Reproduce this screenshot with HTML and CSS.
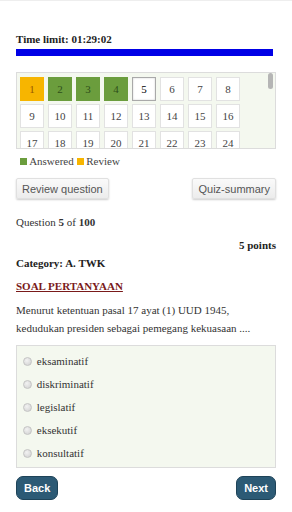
FILE: index.html
```html
<!DOCTYPE html>
<html lang="id">
<head>
  <meta charset="UTF-8" />
  <meta name="viewport" content="width=device-width, initial-scale=1" />
  <title>Quiz</title>
  <link rel="stylesheet" href="styles.css">
</head>
<body>
  <div class="page">
    <div class="timer">Time limit: 01:29:02</div>
    <div class="timebar"></div>

    <div class="overview">
      <div class="cells">
        <span class="cell review">1</span>
        <span class="cell answered">2</span>
        <span class="cell answered">3</span>
        <span class="cell answered">4</span>
        <span class="cell current">5</span>
        <span class="cell">6</span>
        <span class="cell">7</span>
        <span class="cell">8</span>
        <span class="cell">9</span>
        <span class="cell">10</span>
        <span class="cell">11</span>
        <span class="cell">12</span>
        <span class="cell">13</span>
        <span class="cell">14</span>
        <span class="cell">15</span>
        <span class="cell">16</span>
        <span class="cell">17</span>
        <span class="cell">18</span>
        <span class="cell">19</span>
        <span class="cell">20</span>
        <span class="cell">21</span>
        <span class="cell">22</span>
        <span class="cell">23</span>
        <span class="cell">24</span>
      </div>
      <div class="scroll-thumb"></div>
    </div>

    <div class="legend">
      <span class="sq sq-answered"></span> Answered
      <span class="sq sq-review"></span> Review
    </div>

    <div class="tools">
      <button class="btn-light">Review question</button>
      <button class="btn-light">Quiz-summary</button>
    </div>

    <p class="counter">Question <b>5</b> of <b>100</b></p>
    <p class="points">5 points</p>
    <p class="category">Category: A. TWK</p>
    <p class="title">SOAL PERTANYAAN</p>
    <p class="question">Menurut ketentuan pasal 17 ayat (1) UUD 1945, kedudukan presiden sebagai pemegang kekuasaan ....</p>

    <ul class="answers">
      <li><input type="radio" name="a"> eksaminatif</li>
      <li><input type="radio" name="a"> diskriminatif</li>
      <li><input type="radio" name="a"> legislatif</li>
      <li><input type="radio" name="a"> eksekutif</li>
      <li><input type="radio" name="a"> konsultatif</li>
    </ul>

    <div class="nav">
      <button class="btn-dark">Back</button>
      <button class="btn-dark">Next</button>
    </div>
  </div>
</body>
</html>
```

FILE: styles.css
```css
body {
  margin: 0;
  font-family: "Liberation Serif", "Times New Roman", serif;
  font-size: 11px;
  color: #333;
  background: #fff;
}
.page {
  padding: 31px 16px 0 16px;
  border-top: 1px solid #eee;
}
.timer {
  font-weight: bold;
  font-size: 11px;
  color: #222;
  line-height: 14px;
}
.timebar {
  height: 7px;
  background: #0000e6;
  margin-top: 3px;
  width: 257px;
}
.overview {
  position: relative;
  margin-top: 16px;
  height: 75px;
  border: 1px solid #dcdcdc;
  background: #f4f8ef;
  overflow: hidden;
}
.cells {
  display: grid;
  grid-template-columns: repeat(8, 24px);
  gap: 3px 4px;
  padding: 4px 0 0 3px;
}
.cell {
  box-sizing: border-box;
  height: 24px;
  border: 1px solid #e2e2e2;
  background: #fff;
  color: #444;
  text-align: center;
  line-height: 22px;
  font-size: 11px;
}
.cell.answered {
  background: #6b9d3d;
  border-color: #6b9d3d;
  color: #2f4f1a;
}
.cell.review {
  background: #f7b500;
  border-color: #f7b500;
  color: #9a5a00;
}
.cell.current {
  border: 1px solid #a9a9a9;
  color: #000;
  box-shadow: inset 0 0 2px #ccc;
}
.scroll-thumb {
  position: absolute;
  right: 2px;
  top: 0;
  width: 5px;
  height: 16px;
  border-radius: 3px;
  background: #b5b5b5;
}
.legend {
  margin-top: 5px;
  color: #444;
  font-size: 11px;
  line-height: 14px;
}
.sq {
  display: inline-block;
  width: 7px;
  height: 7px;
}
.sq-answered {
  background: #6b9d3d;
  margin-left: 4px;
}
.sq-review {
  background: #f7b500;
}
.tools {
  display: flex;
  justify-content: space-between;
  margin-top: 10px;
}
.btn-light {
  font-family: "Liberation Sans", Arial, sans-serif;
  font-size: 11px;
  color: #555;
  height: 21px;
  padding: 0 5px;
  background: linear-gradient(#fafafa, #ececec);
  border: 1px solid #e0e0e0;
  border-radius: 2px;
  box-shadow: 0 1px 2px rgba(0,0,0,0.2);
}
p {
  margin: 0;
}
.counter {
  margin-top: 17px;
  color: #333;
}
.points {
  margin-top: 11px;
  text-align: right;
  font-weight: bold;
  color: #222;
}
.category {
  margin-top: 6px;
  font-weight: bold;
  color: #222;
}
.title {
  margin-top: 11px;
  font-weight: bold;
  color: #7a1a1a;
  text-decoration: underline;
}
.question {
  margin-top: 9px;
  line-height: 18px;
  color: #333;
}
.answers {
  list-style: none;
  margin: 8px 0 0 0;
  padding: 4px 6px 2px 6px;
  border: 1px solid #dcdcdc;
  background: #f4f8ef;
}
.answers li {
  height: 23px;
  line-height: 23px;
  color: #333;
}
.answers input {
  appearance: none;
  box-sizing: border-box;
  width: 9px;
  height: 9px;
  margin: 0 2px 0 0;
  vertical-align: -1px;
  border: 1px solid #c4c4c4;
  border-radius: 50%;
  background: radial-gradient(circle at 40% 35%, #f2f2f2, #cfcfcf);
}
.nav {
  display: flex;
  justify-content: space-between;
  margin-top: 8px;
}
.btn-dark {
  font-family: "Liberation Sans", Arial, sans-serif;
  font-weight: bold;
  font-size: 11px;
  color: #fff;
  height: 24px;
  padding: 0 7px;
  background: #2c5a75;
  border: 1px solid #1e4358;
  border-radius: 7px;
}
```
